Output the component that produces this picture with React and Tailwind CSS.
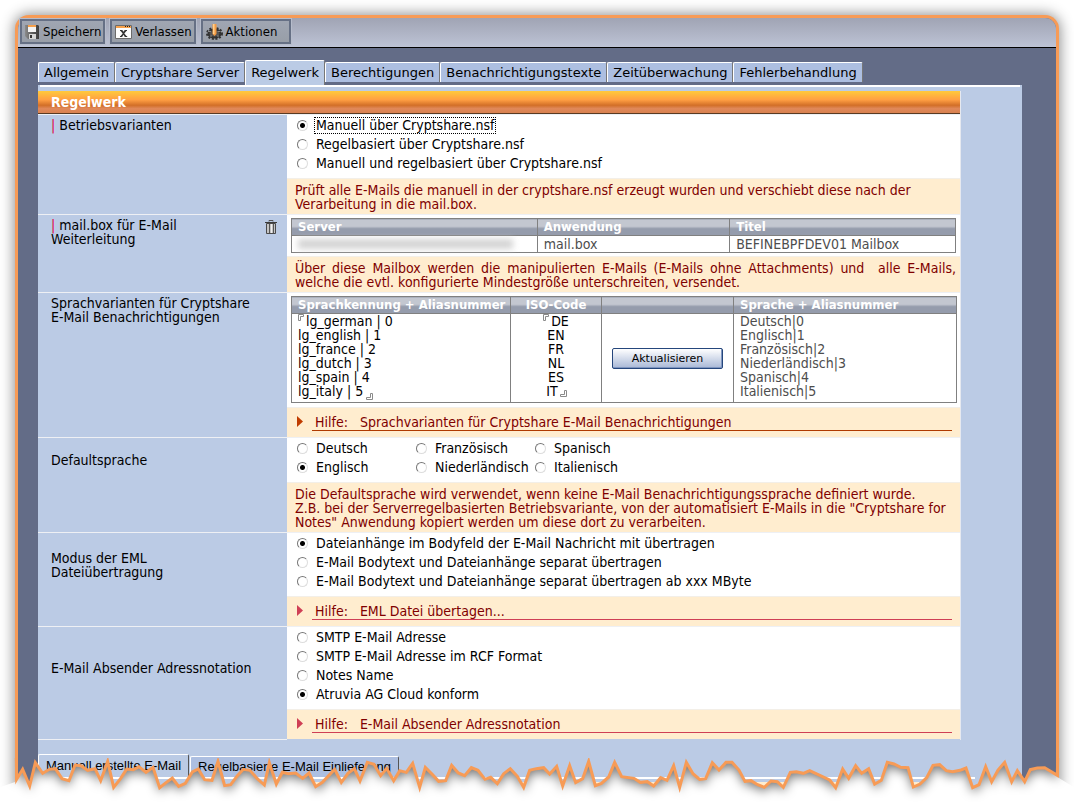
import { useState } from 'react';

const TABS = [
  'Allgemein',
  'Cryptshare Server',
  'Regelwerk',
  'Berechtigungen',
  'Benachrichtigungstexte',
  'Zeitüberwachung',
  'Fehlerbehandlung',
];

const TEAR =
  '50,238 68,208 89,258 106,188 128,220 148,208 166,206 186,236 207,242 225,195 243,197 263,211 285,206 302,242 323,184 341,262 362,235 380,207 400,209 417,200 438,217 459,202 479,263 499,247 517,234 536,259 556,250 577,216 595,207 614,239 636,241 654,184 674,257 692,254 712,227 730,208 750,211 772,236 793,255 808,188 829,252 847,217 865,221 887,219 908,235 927,219 947,260 967,247 1004,208 1024,247 1044,220 1063,206 1080,243 1102,187 1122,193 1142,227 1160,205 1181,242 1199,212 1219,217 1238,190 1259,262 1276,202 1296,222 1316,244 1337,242 1355,196 1375,219 1394,227 1414,203 1434,211 1455,238 1472,232 1492,251 1511,221 1531,206 1552,229 1571,262 1589,211 1609,206 1631,203 1649,222 1670,199 1688,258 1709,197 1727,248 1748,236 1766,184 1786,257 1804,250 1826,231 1844,187 1865,230 1902,235 1921,247 1942,245 1961,258 1982,233 2001,241 2021,197 2039,262 2059,187 2079,221 2099,238 2117,236 2137,188 2157,210 2178,187 2196,187 2217,210 2235,244 2253,242 2273,254 2293,262 2313,243 2332,245 2350,262 2371,217 2389,215 2410,220 2429,212 2489,240 2507,263 2528,207 2546,235 2567,197 2585,220 2606,206 2624,252 2644,241 2662,187 2682,192 2702,202 2724,203 2740,261 2760,252 2780,233 2799,196 2819,194 2839,212 2858,215 2880,211 2898,204 2918,263 2937,254 2957,200 2975,245 2994,210 3014,187 3035,245 3052,212 3074,245 3091,209 3112,204 3134,203 3172,226';
const BELOW_TEAR = `0,262 45,246 ${TEAR} 3177,234 3222,262 3222,312 0,312`;

function SaveIcon() {
  return (
    <svg width="14" height="14" viewBox="0 0 14 14" aria-hidden="true" className="mr-1">
      <defs>
        <linearGradient id="disk" x1="0" y1="0" x2="1" y2="0">
          <stop offset="0" stopColor="#8b8b8b" />
          <stop offset="0.5" stopColor="#5d5d5d" />
          <stop offset="1" stopColor="#3d3d3d" />
        </linearGradient>
      </defs>
      <path d="M0 0h13l1 1v13H3L0 11z" fill="url(#disk)" />
      <path d="M3 1h8v6H3z" fill="#f4f4f4" />
      <path d="M3 0h8v2H3z" fill="#f5a04c" />
      <path d="M4 9h7v5H4z" fill="#d6d6d6" />
      <path d="M5 10h2v3H5z" fill="#333" />
    </svg>
  );
}

function LeaveIcon() {
  return (
    <svg width="17" height="14" viewBox="0 0 17 14" aria-hidden="true" className="mr-[3px]">
      <path d="M.5.5h16v13H.5z" fill="#fdfdfd" stroke="#6b6b6b" />
      <path d="M1 1h15v2H1z" fill="#f8a24c" />
      <path d="M10 1h1v1h-1zM12 1h1v1h-1zM14 1h1v1h-1z" fill="#222" />
      <path d="M5 5h2.3l1.2 1.8L9.700 5H12v1h-.6L9.300 8.500l2.200 2.500h.7v1H9.800L8.500 9.700 7.100 12H5v-1h.6L7.700 8.500 5.600 6H5z" fill="#333" />
    </svg>
  );
}

function GearIcon() {
  return (
    <svg width="17" height="16" viewBox="0 0 17 16" aria-hidden="true" className="mr-[3px]">
      <ellipse cx="8.500" cy="9.500" rx="6" ry="4" fill="#555" stroke="#333" strokeWidth="2" />
      <ellipse cx="8.500" cy="9.500" rx="7.500" ry="5.500" fill="none" stroke="#333" strokeWidth="2" strokeDasharray="2 1.600" />
      <path d="M2 7.500h3M11.500 7.500h3M4 12h2M11 12h2" stroke="#888" />
      <path d="M6.500 0h4v10l-2 2-2-2z" fill="#f39a43" />
      <path d="M7 0h1.500v10H7z" fill="#ffd08c" />
    </svg>
  );
}

function TrashIcon() {
  return (
    <svg width="12" height="14" viewBox="0 0 12 14" aria-hidden="true">
      <path d="M1.500 3.500h9v10h-9z" fill="#c4c4c4" stroke="#4a4a4a" />
      <path d="M0 2.500h12" stroke="#3c3c3c" />
      <path d="M4 1.500V.5h4v1" fill="none" stroke="#555" />
      <path d="M4.500 4v9M8.500 4v9" stroke="#555" />
      <path d="M6.500 4v9" stroke="#f0f0f0" />
    </svg>
  );
}

function Corner({ className, end }) {
  return (
    <svg width="7" height="7" viewBox="0 0 7 7" aria-hidden="true" className={`pointer-events-none absolute ${className}`}>
      <path d={end ? 'M4.500.5h2v6h-6v-2h4z' : 'M.5.5h5v2h-3v4h-2z'} fill="#fff" stroke="#8a8a8a" />
    </svg>
  );
}

function ToolButton({ icon, label, wide }) {
  return (
    <button
      className={`flex h-[25px] items-center border-2 border-[#667085] bg-linear-to-b from-[#a0a6b2] to-[#989ea8] pl-[3px] text-[13px] leading-none outline outline-[#b6bccb] ${wide ? 'pr-3' : 'pr-[2px]'}`}
    >
      {icon}
      {label}
    </button>
  );
}

function Radio({ name, label, checked, onChange, focused }) {
  return (
    <label className="flex h-[19px] items-center gap-[6px]">
      <input
        type="radio"
        name={name}
        checked={checked}
        onChange={onChange}
        className="size-[11px] shrink-0 appearance-none rounded-full border border-t-[#777] border-r-[#ddd] border-b-[#ddd] border-l-[#777] bg-white checked:bg-[radial-gradient(circle,#000_2px,transparent_3px)]"
      />
      <span className={`whitespace-nowrap border border-dotted px-px leading-[15px] ${focused ? 'border-black' : 'border-transparent'}`}>
        {label}
      </span>
    </label>
  );
}

function RadioGroup({ name, options, initial, focus, className = '' }) {
  const [value, setValue] = useState(initial);
  return (
    <div role="radiogroup" aria-label={name} className={`pt-px pb-[5px] pl-[10px] ${className}`}>
      {options.map((o) => (
        <Radio key={o} name={name} label={o} checked={value === o} onChange={() => setValue(o)} focused={focus && value === o} />
      ))}
    </div>
  );
}

function Row({ label, children, help, center }) {
  return (
    <div className="grid grid-cols-[249px_1fr] border-t border-[#eef0f4]">
      <div className={`flex justify-between pr-[10px] pl-[13px] leading-[14px] ${center ? 'items-center' : 'items-start pt-[3px]'}`}>
        {label}
      </div>
      <div className="bg-white">{children}</div>
      <div className="col-start-2 border-t border-[#f3efe8] bg-[#ffedcf] text-[#800000]">{help}</div>
    </div>
  );
}

function HelpText({ children, justify }) {
  return <p className={`pt-1 pr-1 pb-[3px] pl-2 leading-[14px] ${justify ? 'text-justify' : ''}`}>{children}</p>;
}

function HelpLink({ title, orange }) {
  return (
    <div className="flex h-[29px] items-start gap-2 pt-[7px] pr-2 pl-[10px]">
      <svg width="7" height="11" viewBox="0 0 7 11" aria-hidden="true" className={`mt-px shrink-0 ${orange ? 'text-[#c03c00]' : 'text-[#cf3f55]'}`}>
        <path d="M0 0l6 5.500-6 5.500z" fill="currentColor" />
      </svg>
      <a
        href="#hilfe"
        className={`flex grow gap-3 border-b pb-px pl-[3px] leading-[14px] ${orange ? 'border-b-[#b03a00]' : 'border-b-[#cf3f55]'}`}
      >
        <span>Hilfe:</span>
        <span>{title}</span>
      </a>
    </div>
  );
}

function Th({ children, className = 'text-left' }) {
  return (
    <th className={`h-[17px] border border-[#808080] bg-linear-to-b from-[#c3c7d0] from-45% to-[#959cac] to-55% px-[6px] text-[13px] leading-[14px] font-bold whitespace-nowrap text-white ${className}`}>
      {children}
    </th>
  );
}

function TornEdge() {
  return (
    <svg
      viewBox="0 174 3222 138"
      preserveAspectRatio="none"
      aria-hidden="true"
      className="pointer-events-none absolute right-[-18px] bottom-[-14px] left-[-18px] h-[46px] w-[calc(100%+36px)]"
    >
      <defs>
        <clipPath id="below">
          <polygon points={BELOW_TEAR} />
        </clipPath>
        <filter id="soft" x="-5%" y="-30%" width="110%" height="160%">
          <feGaussianBlur stdDeviation="16" />
        </filter>
      </defs>
      <polygon points={BELOW_TEAR} fill="#fff" />
      <g clipPath="url(#below)">
        <polygon
          points={`50,0 ${TEAR} 3172,0`}
          transform="translate(0 12)"
          fill="#000"
          fillOpacity="0.55"
          filter="url(#soft)"
        />
      </g>
      <polyline points={`49,174 ${TEAR} 3173,174`} fill="none" stroke="#f79b56" strokeWidth="3" vectorEffect="non-scaling-stroke" />
    </svg>
  );
}

export default function App() {
  const [tab, setTab] = useState('Regelwerk');
  const [aliases, setAliases] = useState('lg_german | 0\nlg_english | 1\nlg_france | 2\nlg_dutch | 3\nlg_spain | 4\nlg_italy | 5');
  const [codes, setCodes] = useState('DE\nEN\nFR\nNL\nES\nIT\u00a0\u00a0');

  return (
    <div className="bg-white px-[15px] pt-[15px] pb-[14px] font-['DejaVu_Sans_Condensed','DejaVu_Sans',sans-serif] text-[14px] text-black">
      <div className="relative rounded-t-[14px] border-[3px] border-b-0 border-[#f79b56] bg-[#636c87] shadow-[0_0_14px_1px_rgba(0,0,0,0.45)]">
        {/* Toolbar */}
        <div className="flex gap-[5px] rounded-t-[11px] border-b border-black bg-linear-to-b from-[#a0a4b4] to-[#bdc3d5] pt-px pr-3 pb-[3px] pl-[2px]">
          <ToolButton icon={<SaveIcon />} label="Speichern" />
          <ToolButton icon={<LeaveIcon />} label="Verlassen" />
          <ToolButton icon={<GearIcon />} label="Aktionen" wide />
        </div>

        {/* Tabs */}
        <div role="tablist" className="flex h-[37px] items-end pl-[20px] font-['DejaVu_Sans',sans-serif] text-[13px]">
          {TABS.map((t) => (
            <button
              key={t}
              role="tab"
              aria-selected={t === tab}
              onClick={() => setTab(t)}
              className={`rounded-t-[2px] border-t border-r border-l border-t-white border-r-[#777] border-l-white px-[5px] whitespace-nowrap ${
                t === tab ? 'h-[25px] bg-[#bbcbe5]' : 'mb-[3px] h-[20px] bg-[#adbfe1]'
              }`}
            >
              {t}
            </button>
          ))}
        </div>

        <main className="mr-[34px] ml-[20px] bg-[#bbcbe5]">
          <div className="mr-[2px] ml-[2px] h-[3px] border-t-2 border-white" />
          <div className="mt-[3px] mr-[61px] border-r border-[#e6e9f0]">
            <h1 className="h-[23px] border-b border-[#5a3a22] bg-[linear-gradient(#ffca3c,#ff9f43_40%,#d26f28_65%,#e0885a_80%,#d98250)] pl-[13px] leading-[22px] font-bold text-white">
              Regelwerk
            </h1>

            <Row
              label={<span><span className="text-[#e0003c]">|</span> Betriebsvarianten</span>}
              help={
                <HelpText>
                  Prüft alle E-Mails die manuell in der cryptshare.nsf erzeugt wurden und verschiebt diese nach der<br />
                  Verarbeitung in die mail.box.
                </HelpText>
              }
            >
              <RadioGroup
                name="Betriebsvarianten"
                initial="Manuell über Cryptshare.nsf"
                focus
                options={['Manuell über Cryptshare.nsf', 'Regelbasiert über Cryptshare.nsf', 'Manuell und regelbasiert über Cryptshare.nsf']}
              />
            </Row>

            <Row
              label={
                <>
                  <span><span className="text-[#e0003c]">|</span> mail.box für E-Mail<br />Weiterleitung</span>
                  <button aria-label="Löschen" className="pt-[2px]"><TrashIcon /></button>
                </>
              }
              help={
                <HelpText justify>
                  Über diese Mailbox werden die manipulierten E-Mails (E-Mails ohne Attachments) und&nbsp; alle E-Mails,
                  welche die evtl. konfigurierte Mindestgröße unterschreiten, versendet.
                </HelpText>
              }
            >
              <div className="pt-[3px] pr-1 pb-[3px] pl-1">
                <table className="w-full table-fixed border-collapse">
                  <colgroup>
                    <col className="w-[37%]" />
                    <col className="w-[29%]" />
                    <col />
                  </colgroup>
                  <thead>
                    <tr><Th>Server</Th><Th>Anwendung</Th><Th>Titel</Th></tr>
                  </thead>
                  <tbody className="text-[#4d4d4d]">
                    <tr>
                      <td className="h-[17px] border border-[#808080] pr-6 pl-[6px]">
                        <div className="h-[10px] bg-[#d4d4d4] blur-[3px]" />
                      </td>
                      <td className="border border-[#808080] px-[6px] leading-[14px]">mail.box</td>
                      <td className="border border-[#808080] px-[6px] leading-[14px]">BEFINEBPFDEV01 Mailbox</td>
                    </tr>
                  </tbody>
                </table>
              </div>
            </Row>

            <Row
              label={<span>Sprachvarianten für Cryptshare<br />E-Mail Benachrichtigungen</span>}
              help={<HelpLink orange title="Sprachvarianten für Cryptshare E-Mail Benachrichtigungen" />}
            >
              <div className="pt-[3px] pr-[3px] pb-1 pl-1">
                <table className="w-full table-fixed border-collapse">
                  <colgroup>
                    <col className="w-[219px]" />
                    <col className="w-[91px]" />
                    <col className="w-[132px]" />
                    <col />
                  </colgroup>
                  <thead>
                    <tr>
                      <Th>Sprachkennung + Aliasnummer</Th>
                      <Th className="text-center">ISO-Code</Th>
                      <Th />
                      <Th>Sprache + Aliasnummer</Th>
                    </tr>
                  </thead>
                  <tbody>
                    <tr className="leading-[14px]">
                      <td className="relative border border-[#808080] p-0 align-top">
                        <Corner className="top-0 left-[6px]" />
                        <textarea
                          aria-label="Sprachkennung + Aliasnummer"
                          rows={6}
                          value={aliases}
                          onChange={(e) => setAliases(e.target.value)}
                          className="block h-[86px] w-full resize-none overflow-hidden pl-[6px] indent-[8px] leading-[14px] outline-none"
                        />
                        <Corner end className="bottom-[2px] left-[74px]" />
                      </td>
                      <td className="relative border border-[#808080] p-0 align-top">
                        <Corner className="top-0 left-[32px]" />
                        <textarea
                          aria-label="ISO-Code"
                          rows={6}
                          value={codes}
                          onChange={(e) => setCodes(e.target.value)}
                          className="block h-[86px] w-full resize-none overflow-hidden text-center indent-[8px] leading-[14px] outline-none"
                        />
                        <Corner end className="bottom-[5px] left-[49px]" />
                      </td>
                      <td className="border border-[#808080] px-[10px]">
                        <button className="h-[21px] w-full rounded-[2px] border border-[#25467c] bg-linear-to-b from-white to-[#a9b8d6] font-['DejaVu_Sans',sans-serif] text-[11px] leading-none shadow-[inset_-1px_-1px_0_#7f96c0]">
                          Aktualisieren
                        </button>
                      </td>
                      <td className="h-[89px] border border-[#808080] px-[6px] align-top text-[#4d4d4d]">
                        {['Deutsch|0', 'Englisch|1', 'Französisch|2', 'Niederländisch|3', 'Spanisch|4', 'Italienisch|5'].map((s) => (
                          <div key={s}>{s}</div>
                        ))}
                      </td>
                    </tr>
                  </tbody>
                </table>
              </div>
            </Row>

            <Row
              center
              label="Defaultsprache"
              help={
                <HelpText>
                  Die Defaultsprache wird verwendet, wenn keine E-Mail Benachrichtigungssprache definiert wurde.<br />
                  Z.B. bei der Serverregelbasierten Betriebsvariante, von der automatisiert E-Mails in die "Cryptshare for<br />
                  Notes" Anwendung kopiert werden um diese dort zu verarbeiten.
                </HelpText>
              }
            >
              <RadioGroup
                name="Defaultsprache"
                initial="Englisch"
                className="grid grid-flow-col grid-cols-[119px_119px_119px] grid-rows-2"
                options={['Deutsch', 'Englisch', 'Französisch', 'Niederländisch', 'Spanisch', 'Italienisch']}
              />
            </Row>

            <Row center label={<span>Modus der EML<br />Dateiübertragung</span>} help={<HelpLink title="EML Datei übertagen..." />}>
              <RadioGroup
                name="Modus der EML Dateiübertragung"
                initial="Dateianhänge im Bodyfeld der E-Mail Nachricht mit übertragen"
                options={[
                  'Dateianhänge im Bodyfeld der E-Mail Nachricht mit übertragen',
                  'E-Mail Bodytext und Dateianhänge separat übertragen',
                  'E-Mail Bodytext und Dateianhänge separat übertragen ab xxx MByte',
                ]}
              />
            </Row>

            <Row center label="E-Mail Absender Adressnotation" help={<HelpLink title="E-Mail Absender Adressnotation" />}>
              <RadioGroup
                name="E-Mail Absender Adressnotation"
                initial="Atruvia AG Cloud konform"
                options={['SMTP E-Mail Adresse', 'SMTP E-Mail Adresse im RCF Format', 'Notes Name', 'Atruvia AG Cloud konform']}
              />
            </Row>
            <div className="w-[249px] border-t border-[#eef0f4]" />
          </div>

          {/* Lower tabs */}
          <div className="mr-[47px] pt-[14px] font-['Liberation_Sans',Arial,sans-serif] text-[13px]">
            <div role="tablist" className="flex items-end gap-px border-b-2 border-white">
              <button role="tab" aria-selected="true" className="h-[23px] rounded-t-[2px] border-t border-r border-l border-t-white border-r-[#555] border-l-white px-[7px] whitespace-nowrap">
                Manuell erstellte E-Mail
              </button>
              <button role="tab" aria-selected="false" className="h-[21px] rounded-t-[2px] border-t border-r border-l border-t-white border-r-[#555] border-l-white bg-[#adbfe1] px-[7px] whitespace-nowrap">
                Regelbasierte E-Mail Einlieferung
              </button>
            </div>
            <div className="mt-[3px] mr-[56px] ml-[249px] h-[8px] bg-[#ffedcf]" />
          </div>
        </main>

        <TornEdge />
      </div>
    </div>
  );
}
